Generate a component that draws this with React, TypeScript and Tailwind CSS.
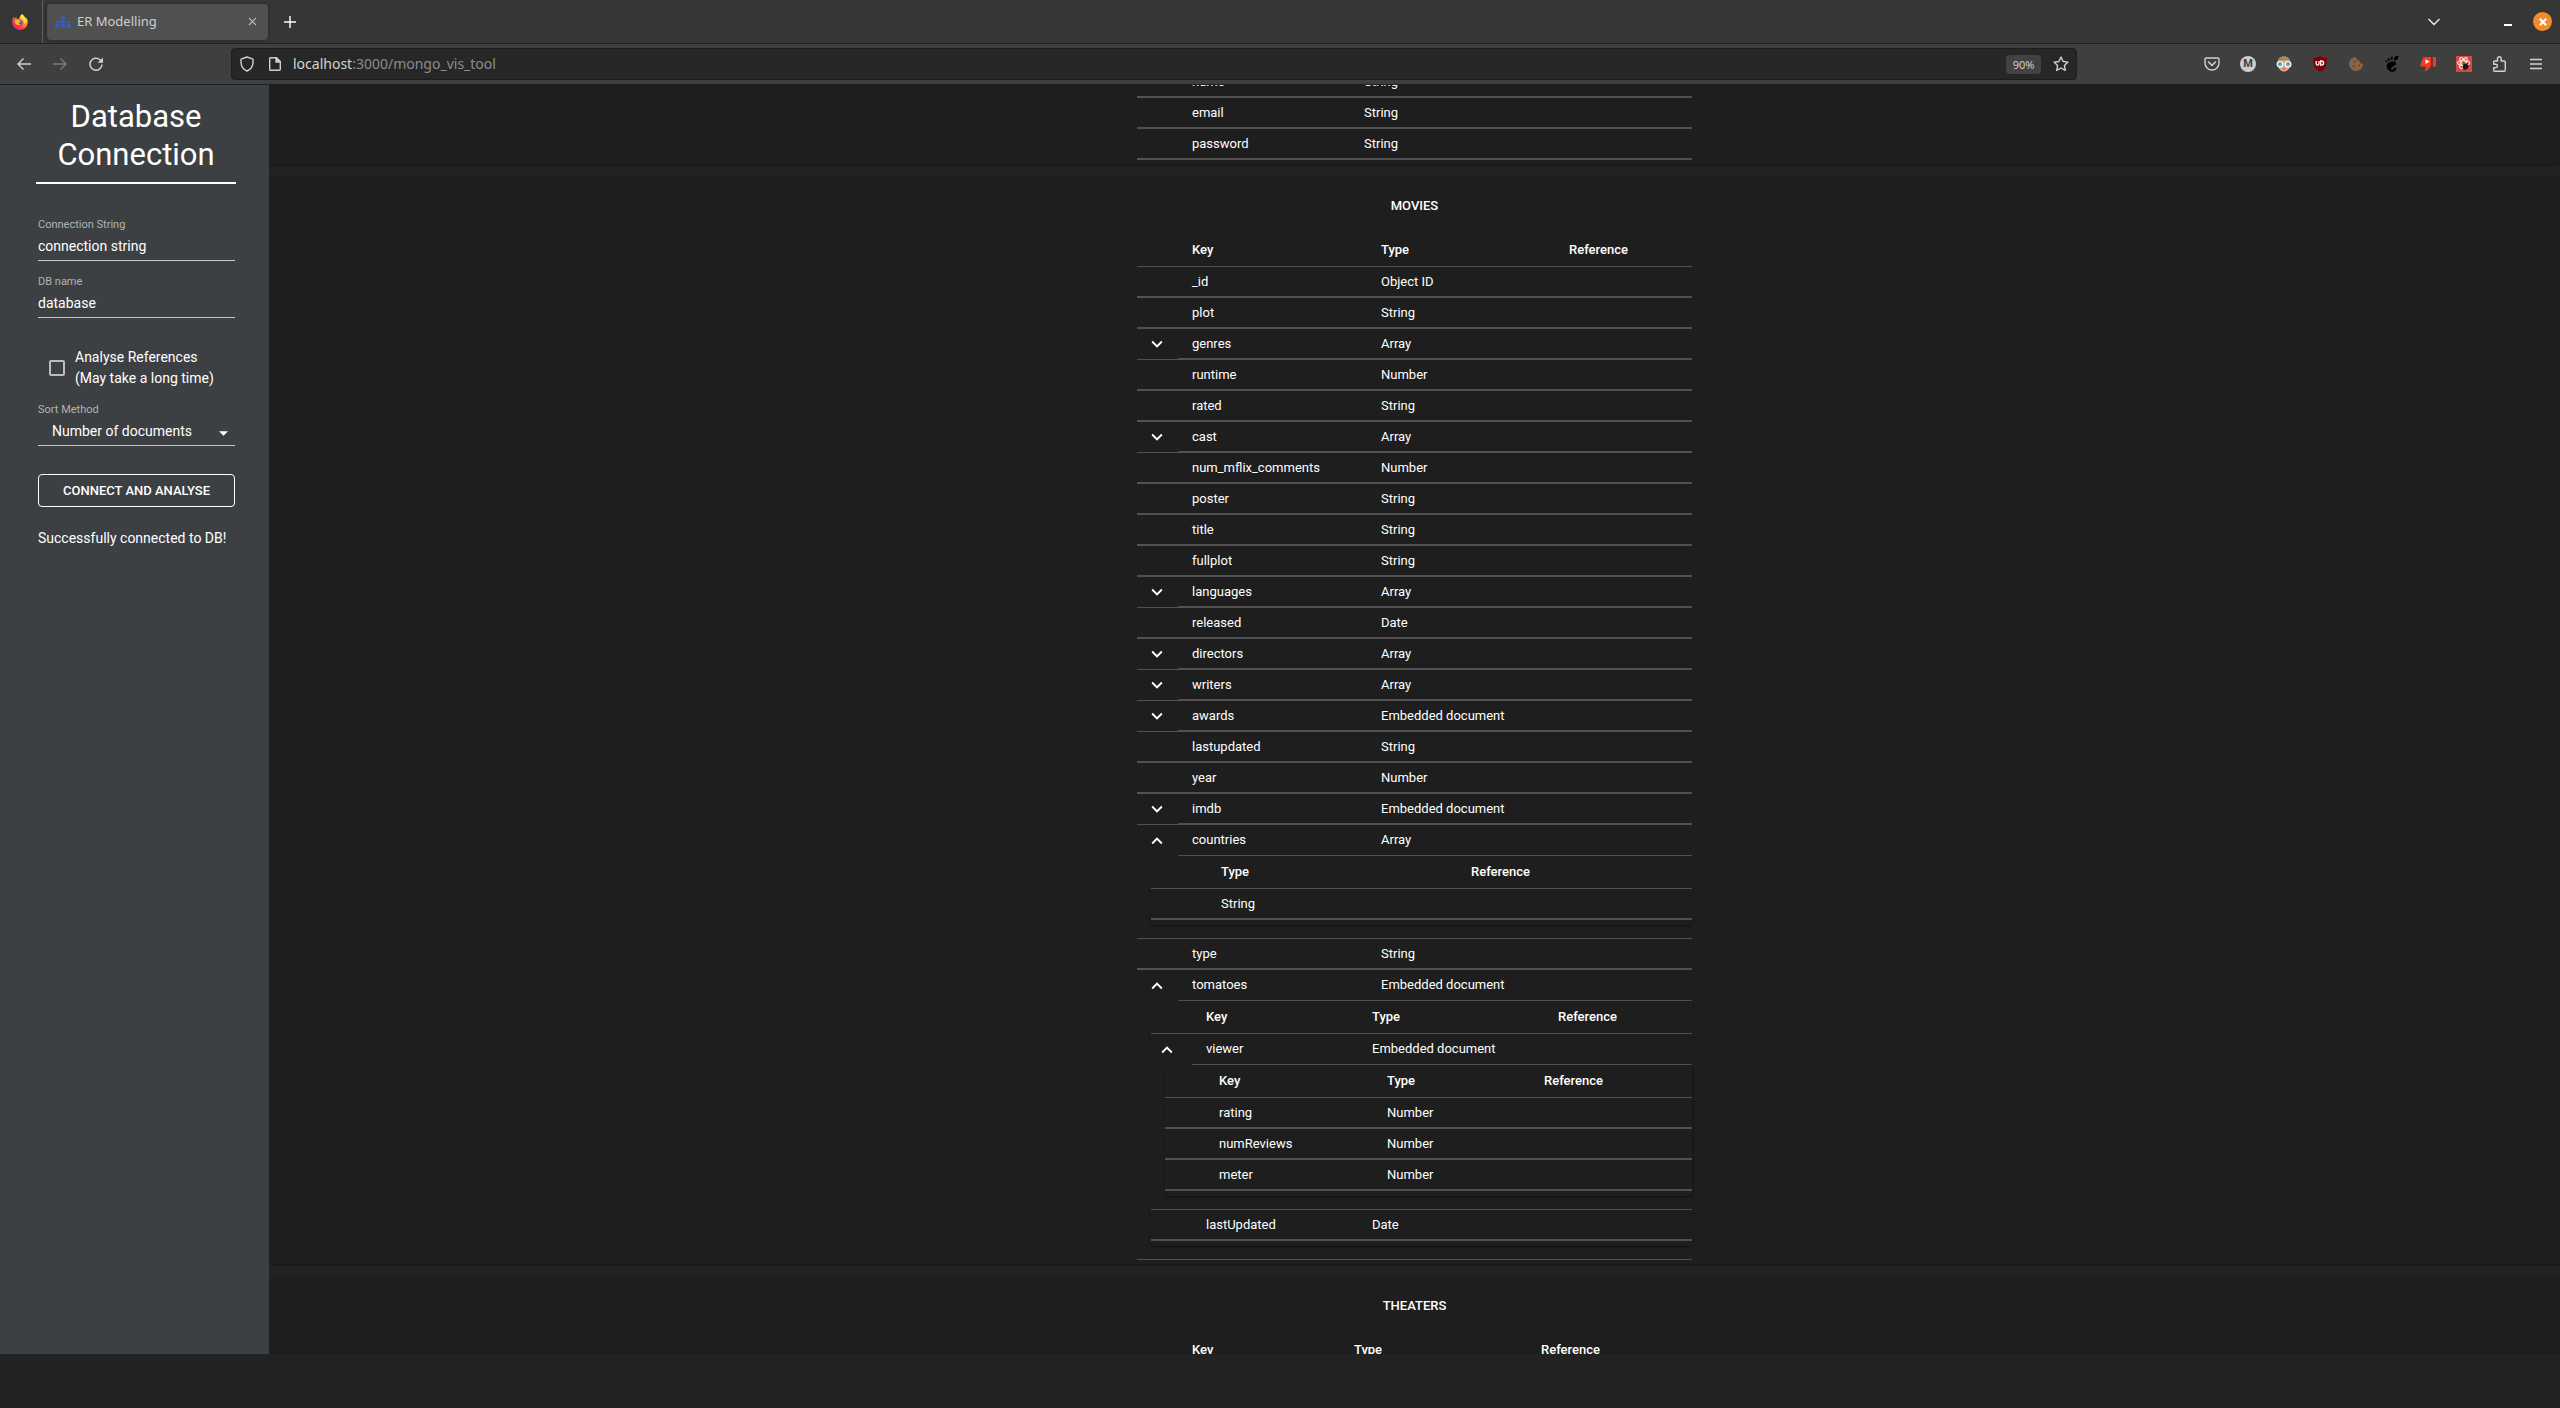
import React, { useState } from "react";
import { SiGnome } from "react-icons/si";
import { FaCookieBite } from "react-icons/fa";
import { MdKeyboardArrowDown, MdKeyboardArrowUp } from "react-icons/md";

type Field = {
  name: string;
  type: string;
  expandable?: boolean;
  child?: Schema;
};

type Schema = {
  cols: string;
  headers?: string[];
  fields: Field[];
};

const users: Schema = {
  cols: "users",
  fields: [
    { name: "name", type: "String" },
    { name: "email", type: "String" },
    { name: "password", type: "String" },
  ],
};

const movies: Schema = {
  cols: "movies",
  headers: ["Key", "Type", "Reference"],
  fields: [
    { name: "_id", type: "Object ID" },
    { name: "plot", type: "String" },
    { name: "genres", type: "Array", expandable: true },
    { name: "runtime", type: "Number" },
    { name: "rated", type: "String" },
    { name: "cast", type: "Array", expandable: true },
    { name: "num_mflix_comments", type: "Number" },
    { name: "poster", type: "String" },
    { name: "title", type: "String" },
    { name: "fullplot", type: "String" },
    { name: "languages", type: "Array", expandable: true },
    { name: "released", type: "Date" },
    { name: "directors", type: "Array", expandable: true },
    { name: "writers", type: "Array", expandable: true },
    { name: "awards", type: "Embedded document", expandable: true },
    { name: "lastupdated", type: "String" },
    { name: "year", type: "Number" },
    { name: "imdb", type: "Embedded document", expandable: true },
    {
      name: "countries",
      type: "Array",
      child: {
        cols: "array",
        headers: ["Type", "Reference"],
        fields: [{ name: "String", type: "" }],
      },
    },
    { name: "type", type: "String" },
    {
      name: "tomatoes",
      type: "Embedded document",
      child: {
        cols: "tomatoes",
        headers: ["Key", "Type", "Reference"],
        fields: [
          {
            name: "viewer",
            type: "Embedded document",
            child: {
              cols: "viewer",
              headers: ["Key", "Type", "Reference"],
              fields: [
                { name: "rating", type: "Number" },
                { name: "numReviews", type: "Number" },
                { name: "meter", type: "Number" },
              ],
            },
          },
          { name: "lastUpdated", type: "Date" },
        ],
      },
    },
  ],
};

const theaters: Schema = {
  cols: "theaters",
  headers: ["Key", "Type", "Reference"],
  fields: [{ name: "_id", type: "Object ID" }],
};

const columnWidths: Record<string, string[]> = {
  users: ["w-[41px]", "w-[172px]", "w-[187px]", "w-auto"],
  movies: ["w-[41px]", "w-[189px]", "w-[188px]", "w-auto"],
  array: ["w-[56px]", "w-[250px]", "w-auto"],
  tomatoes: ["w-[41px]", "w-[166px]", "w-[186px]", "w-auto"],
  viewer: ["w-[40px]", "w-[168px]", "w-[157px]", "w-auto"],
  theaters: ["w-[41px]", "w-[162px]", "w-[187px]", "w-auto"],
};

const paper =
  "rounded bg-[#1e1e1e] shadow-[0_2px_1px_-1px_rgba(0,0,0,0.2),0_1px_1px_0_rgba(0,0,0,0.14),0_1px_3px_0_rgba(0,0,0,0.12)]";

function FieldRows({ field, columns, nested }: { field: Field; columns: number; nested: boolean }) {
  const [open, setOpen] = useState(Boolean(field.child));
  const canExpand = Boolean(field.expandable || field.child);
  const showChild = open && field.child;
  const cell = showChild ? "border-b" : "border-b-2";
  const lead = showChild ? "" : canExpand ? "border-b" : "border-b-2";
  const Arrow = open ? MdKeyboardArrowUp : MdKeyboardArrowDown;
  return (
    <>
      <tr className="h-[31px]">
        <td className={`border-[#515151] p-0 ${lead}`}>
          {canExpand && (
            <button
              type="button"
              aria-label={`Toggle ${field.name}`}
              onClick={() => setOpen(!open)}
              className={`flex items-center justify-center ${nested ? "ml-[5px]" : "ml-[9px]"}`}
            >
              <Arrow size={22} />
            </button>
          )}
        </td>
        <td className={`border-[#515151] px-3.5 py-0 ${cell}`}>{field.name}</td>
        {columns > 2 && <td className={`border-[#515151] px-3.5 py-0 ${cell}`}>{field.type}</td>}
        <td className={`border-[#515151] p-0 ${cell}`} />
      </tr>
      {showChild && field.child && (
        <tr>
          <td colSpan={columns + 1} className="border-b border-[#515151] p-0 pl-3.5">
            <div className={`mb-[13px] pb-[5px] ${paper}`}>
              <SchemaTable schema={field.child} nested />
            </div>
          </td>
        </tr>
      )}
    </>
  );
}

function SchemaTable({ schema, nested = false }: { schema: Schema; nested?: boolean }) {
  const widths = columnWidths[schema.cols];
  return (
    <table className="w-full table-fixed border-separate border-spacing-0 text-left text-[13px] leading-[18px]">
      <colgroup>
        {widths.map((w, i) => (
          <col key={i} className={w} />
        ))}
      </colgroup>
      {schema.headers && (
        <thead>
          <tr className="h-[33px]">
            <td className="border-b border-[#515151] p-0" />
            {schema.headers.map((h) => (
              <th key={h} scope="col" className="border-b border-[#515151] px-3.5 py-0 font-medium">
                {h}
              </th>
            ))}
          </tr>
        </thead>
      )}
      <tbody>
        {schema.fields.map((f) => (
          <FieldRows key={f.name} field={f} columns={widths.length - 1} nested={nested} />
        ))}
      </tbody>
    </table>
  );
}

function Collection({ title, schema }: { title?: string; schema: Schema }) {
  return (
    <section className={`shrink-0 pb-1 ${paper}`}>
      <div className="mx-auto w-[555px]">
        {title && (
          <h2 className="flex h-[57px] items-center justify-center text-[13px] font-medium">{title}</h2>
        )}
        <SchemaTable schema={schema} />
      </div>
    </section>
  );
}

function TextField({ id, label, value }: { id: string; label: string; value: string }) {
  return (
    <div className="mb-3.5 flex flex-col">
      <label htmlFor={id} className="text-[11px] leading-[14px] text-[#b1b3b4]">
        {label}
      </label>
      <input
        id={id}
        defaultValue={value}
        className="h-[29px] w-full border-b border-[#c4c5c6] bg-transparent text-sm outline-none"
      />
    </div>
  );
}

function Sidebar() {
  return (
    <aside className="w-[269px] shrink-0 bg-[#3c4043] pl-9 pr-[33px] pt-[13px] text-white">
      <h1 className="border-b-2 border-white pb-2 text-center text-[31px] leading-[38px]">
        Database Connection
      </h1>
      <form className="ml-0.5 mt-[34px] w-[197px]" onSubmit={(e) => e.preventDefault()}>
        <TextField id="connection" label="Connection String" value="connection string" />
        <TextField id="database" label="DB name" value="database" />
        <label className="mt-[29px] flex items-center gap-2.5 pl-[11px] text-sm leading-[21px]">
          <input
            type="checkbox"
            className="size-4 shrink-0 appearance-none rounded-xs border-2 border-[#b9bbbc]"
          />
          <span className="whitespace-nowrap">
            Analyse References
            <br />
            (May take a long time)
          </span>
        </label>
        <label htmlFor="sort" className="mt-3.5 block text-[11px] leading-[14px] text-[#b1b3b4]">
          Sort Method
        </label>
        <div className="relative">
          <select
            id="sort"
            className="block h-[29px] w-full appearance-none border-b border-[#c4c5c6] bg-transparent pl-3.5 text-sm outline-none"
          >
            <option>Number of documents</option>
          </select>
          <svg
            viewBox="0 0 10 5"
            className="pointer-events-none absolute right-[7px] top-3.5 h-[5px] w-[9px] fill-white"
          >
            <path d="M0 0h10L5 5z" />
          </svg>
        </div>
        <button
          type="submit"
          className="mt-7 block h-[33px] w-full rounded border border-white text-[13px] font-medium"
        >
          CONNECT AND ANALYSE
        </button>
        <p className="mt-[21px] whitespace-nowrap text-sm leading-[21px]">Successfully connected to DB!</p>
      </form>
    </aside>
  );
}

function FirefoxLogo() {
  return (
    <svg viewBox="0 0 16 16" className="size-4">
      <defs>
        <linearGradient id="fxBody" x1="0.85" y1="0.1" x2="0.2" y2="0.95">
          <stop offset="0" stopColor="#fff44f" />
          <stop offset="0.35" stopColor="#ffa01a" />
          <stop offset="0.65" stopColor="#ff4a3c" />
          <stop offset="1" stopColor="#e8187f" />
        </linearGradient>
      </defs>
      <path
        fill="url(#fxBody)"
        d="M15.3 5.4c-.4-.9-1.1-1.8-1.7-2.1.5.9.8 1.9.9 2.5C13.6 3.5 12 2.6 10.7.6 10.3 0 10.3 0 10.2 0 8.2 1.2 7.5 3.3 7.5 4.6c-.9.1-1.7.4-2.4.9C4.5 5 4.4 4 4.6 3c-1 .5-1.7 1.2-2.3 1.8-.3-.5-.3-1.7-.2-2.2C1 3.5.2 6 .2 8.3A7.8 7.8 0 0 0 8 16a7.7 7.7 0 0 0 7.7-7.2c.1-1.2-.1-2.4-.4-3.4z"
      />
      <circle cx="7.8" cy="8.6" r="2.8" fill="#7a3ddb" />
      <path
        fill="#ffb21c"
        d="M2.7 7c1-1.5 3.5-1.8 4.5-.4 1 0 1.7.2 1.7.7-.1.7-1.4.7-1.8 1.4-.1.8.8 1.5 2 1.300-2.500 2.500-6.400.6-6.400-3z"
      />
      <path fill="#ffe04a" d="M8.500 4.200C11 4.700 13 6.500 12.200 10c2.300-1.500 2.200-4.500.8-6.500L10.300.6C9 1.500 8.500 3 8.500 4.200z" />
    </svg>
  );
}

const line = { fill: "none", stroke: "currentColor", strokeWidth: 1.4 } as const;

function NavButton({ label, children, dim = false }: { label: string; children: React.ReactNode; dim?: boolean }) {
  return (
    <button
      type="button"
      aria-label={label}
      className={`flex h-8 w-9 items-center justify-center ${dim ? "text-[#7c7c7c]" : "text-[#d2d2d2]"}`}
    >
      {children}
    </button>
  );
}

function TabStrip() {
  return (
    <div className="flex h-11 items-center border-b border-[#202020] bg-[#363636]">
      <div className="flex w-[42px] justify-center pr-0.5">
        <FirefoxLogo />
      </div>
      <div className="h-full w-px bg-[#606060]" />
      <div className="ml-1 flex h-9 w-[221px] items-center rounded bg-[#505050] px-2 shadow-[0_0_3px_rgba(0,0,0,0.4)]">
        <svg viewBox="0 0 16 12" className="h-3 w-4 text-[#2f62e8]" {...line} strokeWidth={1.2}>
          <circle cx="8" cy="2.2" r="1.5" />
          <path d="M8 3.700v4.500M2.200 8.200V6h11.600v2.200" />
          <circle cx="2.2" cy="9.8" r="1.5" />
          <circle cx="8" cy="9.8" r="1.5" />
          <circle cx="13.8" cy="9.8" r="1.5" />
        </svg>
        <span className="ml-1.5 flex-1 font-['Noto_Sans'] text-[13px] text-[#cfcfcf]">ER Modelling</span>
        <button type="button" aria-label="Close tab" className="flex w-4 justify-center text-[#bdbdbd]">
          <svg viewBox="0 0 10 10" className="size-[9px]" {...line} strokeWidth={1.3}>
            <path d="M1 1l8 8M9 1l-8 8" />
          </svg>
        </button>
      </div>
      <button type="button" aria-label="New tab" className="ml-4 text-white">
        <svg viewBox="0 0 12 12" className="size-3" {...line}>
          <path d="M6 0v12M0 6h12" />
        </svg>
      </button>
      <div className="flex-1" />
      <button type="button" aria-label="List all tabs" className="mr-[62px] text-[#ededed]">
        <svg viewBox="0 0 12 8" className="h-2 w-3" {...line}>
          <path d="M.5 1L6 6.500 11.500 1" />
        </svg>
      </button>
      <button type="button" aria-label="Minimise" className="mr-[19px] flex h-2 w-3 items-end justify-center">
        <span className="h-0.5 w-2 bg-white" />
      </button>
      <button
        type="button"
        aria-label="Close window"
        className="mr-2 flex size-[19px] items-center justify-center rounded-full bg-[#f28b2e] text-white"
      >
        <svg viewBox="0 0 8 8" className="size-2" {...line} strokeWidth={2}>
          <path d="M.8.8l6.400 6.400M7.200.8L.8 7.200" />
        </svg>
      </button>
    </div>
  );
}

function Toolbar() {
  return (
    <div className="flex h-10 items-center bg-[#3f3f3f] px-1.5">
      <NavButton label="Back">
        <svg viewBox="0 0 14 14" className="size-3.5" {...line}>
          <path d="M6.500 1.500L1 7l5.500 5.500M1 7h13" />
        </svg>
      </NavButton>
      <NavButton label="Forward" dim>
        <svg viewBox="0 0 14 14" className="size-3.5" {...line}>
          <path d="M7.500 1.500L13 7l-5.500 5.500M13 7H0" />
        </svg>
      </NavButton>
      <NavButton label="Reload">
        <svg viewBox="0 0 14 14" className="size-3.5" {...line} strokeWidth={1.5}>
          <path d="M13 7.500A6 6 0 1 1 11 2.700l1.200 1.200" />
          <path d="M14 .5v5.300H8.700z" fill="currentColor" stroke="none" />
        </svg>
      </NavButton>
      <div className="mx-[117px] flex h-8 flex-1 items-center rounded border border-[#1d1d1d] bg-[#272727] pl-2 text-[#cfcfcf]">
        <svg viewBox="0 0 14 16" className="h-4 w-3.5" {...line}>
          <path d="M7 1l6 2.200V6c0 4.200-2.200 7.400-6 9C3.200 13.400 1 10.200 1 6V3.200z" strokeLinejoin="round" />
        </svg>
        <svg viewBox="0 0 12 14" className="ml-[15px] h-3.5 w-3" {...line}>
          <path d="M1.700.7H7.500L11.300 4.500v7.800a1 1 0 0 1-1 1H1.700a1 1 0 0 1-1-1V1.700a1 1 0 0 1 1-1z" />
          <path d="M7 .7V5h4.300z" fill="currentColor" />
        </svg>
        <a href="#" className="ml-3 flex-1 font-['Noto_Sans'] text-sm text-[#8c8c8c]">
          <span className="text-[#d4d4d4]">localhost</span>:3000/mongo_vis_tool
        </a>
        <button
          type="button"
          className="h-[19px] w-[35px] rounded-sm bg-[#424242] font-['Noto_Sans'] text-[11px] leading-[19px] text-[#cfcfcf]"
        >
          90%
        </button>
        <button type="button" aria-label="Bookmark this page" className="ml-3 mr-[7px]">
          <svg viewBox="0 0 16 16" className="size-4" {...line}>
            <path d="M8 1l2.100 4.500 4.900.6-3.600 3.400.9 4.900L8 12l-4.300 2.400.9-4.900L1 6.100l4.900-.6z" strokeLinejoin="round" />
          </svg>
        </button>
      </div>
      <NavButton label="Save to Pocket">
        <svg viewBox="0 0 16 14" className="h-3.5 w-4" {...line}>
          <path d="M2.200 1h11.600c.7 0 1.200.5 1.200 1.200V6A7 7 0 0 1 1 6V2.200C1 1.500 1.500 1 2.200 1z" />
          <path d="M4.500 5L8 8.300 11.500 5" strokeWidth={1.6} strokeLinecap="round" />
        </svg>
      </NavButton>
      <NavButton label="Mail">
        <span className="flex size-4 items-center justify-center rounded-full bg-[#cdcdcd] text-[11px] font-bold text-[#3f3f3f]">
          M
        </span>
      </NavButton>
      <NavButton label="Privacy glasses">
        <svg viewBox="0 0 16 16" className="size-4">
          <path d="M2 8c0-5 2-7.500 6-7.500S14 3 14 8c0 5-3 7.500-6 7.500S2 13 2 8z" fill="#e3a481" />
          <path d="M1.500 6.500C1.500 2.500 4 .5 8 .5s6.500 2 6.500 6C12 5.500 12 4 9 4 6 5 4 4.500 1.500 6.500z" fill="#a58a52" />
          <circle cx="4" cy="8.2" r="2.8" fill="#5fa7b8" stroke="#eef6f8" strokeWidth="1.4" />
          <circle cx="12" cy="8.2" r="2.8" fill="#5fa7b8" stroke="#eef6f8" strokeWidth="1.4" />
          <path d="M6.500 12.800h3" stroke="#b5654d" />
        </svg>
      </NavButton>
      <NavButton label="uBlock Origin">
        <svg viewBox="0 0 16 16" className="size-4">
          <path d="M8 0c2 1.400 4.500 2 7 2 0 7-1.500 11-7 14C2.500 13 1 9 1 2c2.500 0 5-.6 7-2z" fill="#800000" />
          <path
            d="M4.200 5v2.800a1.400 1.400 0 0 0 2.800 0V5M8.700 5v4.200h.8a2.100 2.100 0 0 0 0-4.200z"
            fill="none"
            stroke="#fff"
            strokeWidth="1.3"
          />
        </svg>
      </NavButton>
      <NavButton label="Cookies">
        <FaCookieBite size={14} color="#8a6344" />
      </NavButton>
      <NavButton label="GNOME Shell integration">
        <SiGnome size={16} color="#000" />
      </NavButton>
      <NavButton label="Return dislikes">
        <svg viewBox="0 0 16 16" className="size-4">
          <path d="M3.500 1H11v9l-5 5.500-1.200-1L6 10.500H1L0 9.300z" fill="#f23a20" />
          <path d="M12.800 1H16v9.500h-3.200z" fill="#f23a20" />
          <path d="M5.500 3.300l4 2.300-4 2.300z" fill="#fff" />
        </svg>
      </NavButton>
      <NavButton label="React developer tools">
        <svg viewBox="0 0 16 16" className="size-4">
          <path d="M0 0h16v16H0z" fill="#d8493b" />
          <g fill="none" stroke="#f6e4e1" strokeWidth="1.2">
            <ellipse cx="7.5" cy="7" rx="6" ry="2.5" />
            <ellipse cx="7.5" cy="7" rx="6" ry="2.5" transform="rotate(60 7.5 7)" />
            <ellipse cx="7.5" cy="7" rx="6" ry="2.5" transform="rotate(120 7.5 7)" />
          </g>
          <path d="M7.500 8l4.500-1-.5 1.800 1.500.7-1.500 3.500-3.500 1-1.500-2.500z" fill="#241413" />
        </svg>
      </NavButton>
      <NavButton label="Extensions">
        <svg viewBox="0 0 16 16" className="size-4" {...line}>
          <path
            d="M5.500 5V2.600a1.800 1.800 0 0 1 3.600 0V5H12a1.300 1.300 0 0 1 1.300 1.300V14a1.300 1.300 0 0 1-1.300 1.300H2.700a1 1 0 0 1-1-1.300v-2.300h2a1.700 1.700 0 0 0 0-3.400h-2V6a1 1 0 0 1 1-1z"
            strokeLinejoin="round"
          />
        </svg>
      </NavButton>
      <NavButton label="Open menu">
        <svg viewBox="0 0 12 12" className="size-3" {...line} strokeWidth={1.3}>
          <path d="M0 1.500h12M0 6h12M0 10.500h12" />
        </svg>
      </NavButton>
    </div>
  );
}

export default function App() {
  return (
    <div className="flex h-screen flex-col overflow-hidden bg-[#222222] pb-[54px] font-['Roboto',sans-serif] text-white">
      <header className="shrink-0 border-b border-[#202020]">
        <TabStrip />
        <Toolbar />
      </header>
      <div className="flex min-h-0 flex-1">
        <Sidebar />
        <main className="flex min-w-0 flex-1 flex-col overflow-hidden">
          <div className="-mt-[18px] flex flex-col gap-[13px]">
            <Collection schema={users} />
            <Collection title="MOVIES" schema={movies} />
            <Collection title="THEATERS" schema={theaters} />
          </div>
        </main>
      </div>
    </div>
  );
}
